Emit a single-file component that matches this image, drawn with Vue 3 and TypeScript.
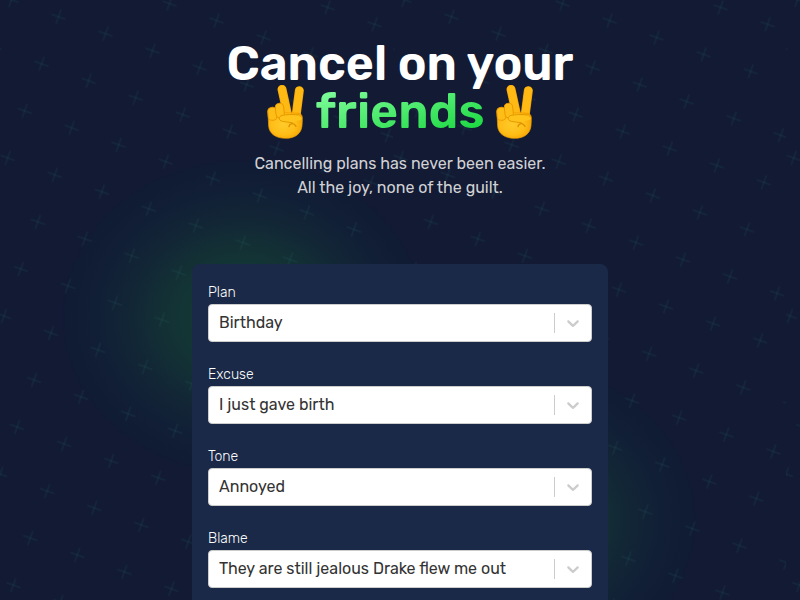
<script setup lang="ts">
import { h, reactive } from 'vue'
import type { FunctionalComponent } from 'vue'

interface Field {
  id: string
  label: string
  value: string
  options: string[]
}

const fields = reactive<Field[]>([
  { id: 'plan', label: 'Plan', value: 'Birthday', options: ['Birthday'] },
  { id: 'excuse', label: 'Excuse', value: 'I just gave birth', options: ['I just gave birth'] },
  { id: 'tone', label: 'Tone', value: 'Annoyed', options: ['Annoyed'] },
  {
    id: 'blame',
    label: 'Blame',
    value: 'They are still jealous Drake flew me out',
    options: ['They are still jealous Drake flew me out'],
  },
])

const VictoryHand: FunctionalComponent = () =>
  h('svg', { viewBox: '22 14 111 162', width: 37, height: 54, role: 'img', 'aria-label': 'Victory hand' }, [
    // raised fingers
    h('path', { d: 'M67 27L84 104', stroke: '#f2a000', 'stroke-width': 27, 'stroke-linecap': 'round' }),
    h('path', { d: 'M119 31L109 108', stroke: '#f2a000', 'stroke-width': 27, 'stroke-linecap': 'round' }),
    h('path', { d: 'M67 27L84 104', stroke: '#ffb914', 'stroke-width': 23, 'stroke-linecap': 'round' }),
    h('path', { d: 'M119 31L109 108', stroke: '#ffb914', 'stroke-width': 23, 'stroke-linecap': 'round' }),
    // palm
    h('path', {
      d: 'M25 96C25 88 33 90 42 96L112 98C124 98 129 105 128 118L127 136C125 160 106 174 78 174C50 174 29 161 27 138Z',
      fill: 'url(#palm)',
      stroke: '#f0a000',
      'stroke-width': 2,
    }),
    // folded fingers
    h('rect', { x: 25, y: 81, width: 26, height: 39, rx: 12, fill: '#ffbd18', stroke: '#eb9a00', 'stroke-width': 3, transform: 'rotate(-5 38 100)' }),
    h('rect', { x: 48, y: 69, width: 25, height: 44, rx: 12, fill: '#ffbd18', stroke: '#eb9a00', 'stroke-width': 3, transform: 'rotate(-6 60 91)' }),
    // thumb
    h('path', {
      d: 'M116 104C98 101 80 103 68 105C56 107 56 121 68 123C80 125 87 126 98 127C110 119 126 123 127 114Z',
      fill: '#ffc31c',
    }),
    h('path', {
      d: 'M116 104C98 101 80 103 68 105C56 107 56 121 68 123C80 125 87 126 98 127',
      stroke: '#e39a00',
      'stroke-width': 3,
      'stroke-linecap': 'round',
    }),
    h('path', {
      d: 'M88 139C90 129 102 125 109 138',
      stroke: '#dc9000',
      'stroke-width': 4,
      'stroke-linecap': 'round',
    }),
  ])
</script>

<template>
  <div class="page">
    <svg class="crosses" width="100%" height="100%" aria-hidden="true">
      <defs>
        <pattern
          id="cross"
          width="50"
          height="50"
          patternUnits="userSpaceOnUse"
          patternTransform="translate(58.5 16.8) rotate(19.8) translate(-25 -25)"
        >
          <path d="M17.5 25h15M25 17.5v15" stroke="#1f5f5f" stroke-opacity=".28" stroke-width="1" />
        </pattern>
        <pattern id="sheet" width="393" height="1200" patternUnits="userSpaceOnUse">
          <rect width="393" height="1200" fill="url(#cross)" />
        </pattern>
        <radialGradient id="palm" cx=".45" cy=".5" r=".6">
          <stop offset="0" stop-color="#ffcb2b" />
          <stop offset=".6" stop-color="#ffbd18" />
          <stop offset="1" stop-color="#f5a300" />
        </radialGradient>
      </defs>
      <rect width="100%" height="100%" fill="url(#sheet)" />
    </svg>

    <main class="content">
      <header class="hero">
        <h1>
          <span>Cancel on your</span>
          <span class="highlight"><VictoryHand class="hand" /><span class="accent">friends</span><VictoryHand class="hand" /></span>
        </h1>
        <p>Cancelling plans has never been easier.<br />All the joy, none of the guilt.</p>
      </header>

      <div class="stage">
        <form class="card" @submit.prevent>
          <div v-for="field in fields" :key="field.id" class="field">
            <label :for="field.id">{{ field.label }}</label>
            <div class="control">
              <select :id="field.id" v-model="field.value">
                <option v-for="option in field.options" :key="option">{{ option }}</option>
              </select>
              <span class="indicator" aria-hidden="true">
                <svg width="20" height="20" viewBox="0 0 20 20">
                  <path
                    d="M4.516 7.548c0.436-0.446 1.043-0.481 1.576 0l3.908 3.747 3.908-3.747c0.533-0.481 1.141-0.446 1.574 0 0.436 0.445 0.408 1.197 0 1.615-0.406 0.418-4.695 4.502-4.695 4.502-0.217 0.223-0.502 0.335-0.787 0.335s-0.57-0.112-0.789-0.335c0 0-4.287-4.084-4.695-4.502s-0.436-1.17 0-1.615z"
                  />
                </svg>
              </span>
            </div>
          </div>
        </form>
      </div>
    </main>
  </div>
</template>

<style>
body {
  background: #121a34;
}
</style>

<style scoped>
.page {
  position: relative;
  min-height: 100vh;
  overflow: hidden;
  font-family: Rubik, Roboto, "Liberation Sans", sans-serif;
  color: #fff;
  background: #121a34;
}

.crosses {
  position: absolute;
  inset: 0;
  z-index: 1;
}

.content {
  padding-top: 40px;
}

.hero {
  position: relative;
  z-index: 2;
  text-align: center;
}

h1 {
  display: grid;
  grid-auto-rows: 48px;
  margin: 0 0 16px;
  font-size: 48px;
  line-height: 48px;
  font-weight: 600;
}

.highlight {
  display: flex;
  justify-content: center;
  align-items: center;
  gap: 12px;
}

.hand {
  flex: none;
  fill: none;
}

.accent {
  color: transparent;
  background: linear-gradient(to bottom right, #86ffa0, #11d438);
  background-clip: text;
  -webkit-background-clip: text;
}

p {
  margin: 0;
  font-size: 16px;
  line-height: 24px;
  color: #d1d1d4;
}

.stage {
  position: relative;
  max-width: 416px;
  margin: 64px auto 0;
}

/* Soft green glows behind the card */
.stage::before,
.stage::after {
  content: "";
  position: absolute;
  width: 364px;
  height: 316px;
  background: radial-gradient(
    closest-side,
    #143a33 0%,
    #133635 32%,
    #132f35 47%,
    #122636 62%,
    #111f36 80%,
    #101b34 97%,
    #101b3400 100%
  );
}

.stage::before {
  left: -131px;
  top: -105px;
}

.stage::after {
  right: -89px;
  top: 98px;
}

.card {
  position: relative;
  z-index: 2;
  display: grid;
  gap: 20px;
  padding: 16px 16px 32px;
  border-radius: 8px;
  background: #1a2948;
}

label {
  display: block;
  padding-top: 2px;
  font-size: 14px;
  line-height: 22px;
  font-weight: 300;
}

.control {
  display: grid;
}

select,
.indicator {
  grid-area: 1 / 1;
}

select {
  appearance: none;
  width: 100%;
  height: 38px;
  margin: 0;
  padding: 0 48px 2px 10px;
  border: 1px solid #ccc;
  border-radius: 4px;
  background: #fff;
  color: #333;
  font: inherit;
  font-size: 16px;
}

.indicator {
  justify-self: end;
  align-self: center;
  display: flex;
  height: 20px;
  padding: 0 9px 0 8px;
  border-left: 1px solid #ccc;
  pointer-events: none;
}

.indicator svg {
  fill: #ccc;
}
</style>
